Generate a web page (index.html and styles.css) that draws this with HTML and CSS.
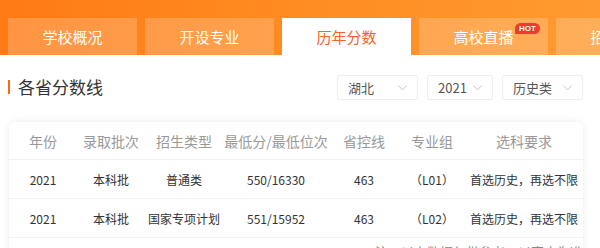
FILE: index.html
```html
<!DOCTYPE html>
<html lang="zh-CN">
<head>
<meta charset="UTF-8">
<meta name="viewport" content="width=device-width, initial-scale=1.0">
<title>各省分数线</title>
<link rel="stylesheet" href="styles.css">
</head>
<body>
<div id="nav">
    <div class="tab">学校概况</div>
    <div class="tab">开设专业</div>
    <div class="tab active">历年分数</div>
    <div class="tab">高校直播<span class="hot">HOT</span></div>
    <div class="tab">招生简章</div>
</div>

<div id="section-head">
    <h2 class="title">各省分数线</h2>
    <div class="filters">
        <div class="select wide"><span>湖北</span><svg width="9" height="6" viewBox="0 0 9 6"><path d="M0.5 0.5 L4.5 5 L8.5 0.5" fill="none" stroke="#c8c8c8" stroke-width="1"/></svg></div>
        <div class="select"><span>2021</span><svg width="9" height="6" viewBox="0 0 9 6"><path d="M0.5 0.5 L4.5 5 L8.5 0.5" fill="none" stroke="#c8c8c8" stroke-width="1"/></svg></div>
        <div class="select wide"><span>历史类</span><svg width="9" height="6" viewBox="0 0 9 6"><path d="M0.5 0.5 L4.5 5 L8.5 0.5" fill="none" stroke="#c8c8c8" stroke-width="1"/></svg></div>
    </div>
</div>

<div id="card">
    <div class="row head">
        <div>年份</div>
        <div>录取批次</div>
        <div>招生类型</div>
        <div>最低分/最低位次</div>
        <div>省控线</div>
        <div>专业组</div>
        <div>选科要求</div>
    </div>
    <div class="row">
        <div>2021</div>
        <div>本科批</div>
        <div>普通类</div>
        <div>550/16330</div>
        <div>463</div>
        <div>（L01）</div>
        <div>首选历史，再选不限</div>
    </div>
    <div class="row">
        <div>2021</div>
        <div>本科批</div>
        <div>国家专项计划</div>
        <div>551/15952</div>
        <div>463</div>
        <div>（L02）</div>
        <div>首选历史，再选不限</div>
    </div>
    <div class="note">注：以上数据仅供参考，以官方为准</div>
</div>
</body>
</html>
```

FILE: styles.css
```css
body {
    font-family: "Noto Sans CJK SC", "Noto Sans", sans-serif;
    background-color: #fff;
    margin: 0;
    color: #333;
    overflow: hidden;
}
#nav {
    display: flex;
    gap: 8px;
    height: 37px;
    padding: 18px 0 0 8px;
    background: linear-gradient(90deg, #ff7a14 0%, #ff8c22 50%, #ff9a30 100%);
    overflow: hidden;
}
.tab {
    position: relative;
    flex: 0 0 129px;
    height: 37px;
    line-height: 37px;
    text-align: center;
    font-size: 15px;
    color: #fff;
    background-color: rgba(255, 255, 255, 0.2);
}
.tab.active {
    background-color: #fff;
    color: #f5622a;
}
.hot {
    position: absolute;
    top: 5px;
    left: 96px;
    width: 25px;
    height: 11px;
    line-height: 11px;
    border-radius: 6px 6px 6px 1px;
    background-color: #ee3b2c;
    color: #fff;
    font-family: "Liberation Sans", Arial, sans-serif;
    font-size: 8px;
    font-weight: bold;
    text-align: center;
}
#section-head {
    display: flex;
    align-items: center;
    justify-content: space-between;
    margin: 20px 17px 0 8px;
    height: 25px;
}
.title {
    margin: 0 0 2px 0;
    padding-left: 8px;
    border-left: 2px solid #ff6a10;
    height: 14px;
    line-height: 14px;
    font-size: 17px;
    font-weight: normal;
    color: #333;
}
.filters {
    display: flex;
    gap: 9px;
}
.select {
    display: flex;
    align-items: center;
    justify-content: space-between;
    box-sizing: border-box;
    width: 66px;
    height: 25px;
    padding: 0 10px 0 10px;
    border: 1px solid #eee;
    border-radius: 2px;
    font-size: 13px;
    color: #555;
}
.select.wide {
    width: 81px;
}
#card {
    margin: 22px 17px 0 9px;
    border-radius: 6px;
    box-shadow: 0 0 8px rgba(0, 0, 0, 0.08);
    background-color: #fff;
}
.row {
    display: grid;
    grid-template-columns: 68px 68px 78px 106px 70px 66px 118px;
    height: 38px;
    align-items: center;
    text-align: center;
    font-size: 12px;
    color: #333;
    border-bottom: 1px solid #f2f2f2;
}
.row.head {
    font-size: 14px;
    color: #999;
    height: 37px;
}
.note {
    padding: 4px 0 8px 0;
    text-align: right;
    font-size: 13px;
    color: #888;
}
```
